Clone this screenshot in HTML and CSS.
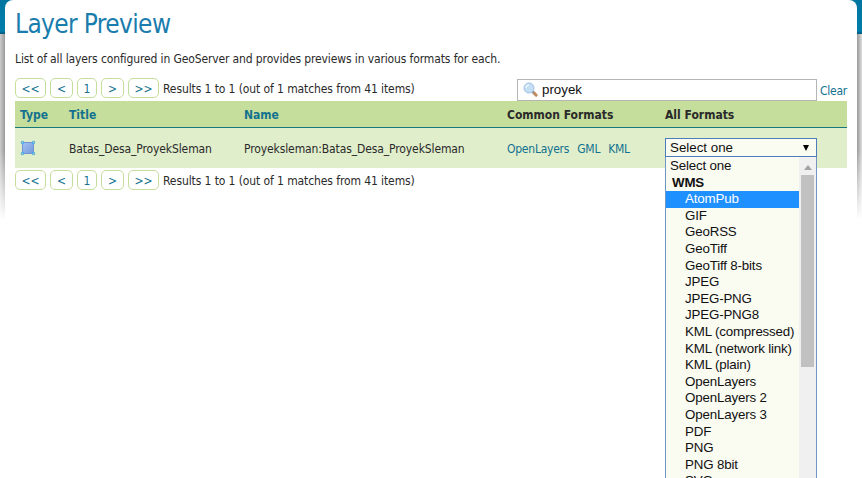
FILE: index.html
```html
<!DOCTYPE html>
<html lang="en">
<head>
<meta charset="utf-8">
<title>Layer Preview</title>
<link rel="stylesheet" href="styles.css">
</head>
<body>
<main class="page">
  <h1>Layer Preview</h1>
  <p class="intro">List of all layers configured in GeoServer and provides previews in various formats for each.</p>
  <div class="toolbar">
    <nav class="pager">
      <a class="wide">&lt;&lt;</a><a class="mid">&lt;</a><a class="num">1</a><a class="mid">&gt;</a><a class="wide">&gt;&gt;</a>
      <span class="results">Results 1 to 1 (out of 1 matches from 41 items)</span>
    </nav>
    <div class="search">
      <div class="field">
        <svg width="16" height="16" viewBox="0 0 16 16">
          <path d="M10.6 10.6l2.6 2.6" stroke="#c08a5c" stroke-width="3" stroke-linecap="round"/>
          <path d="M9.2 9.2l1.6 1.6" stroke="#8d96a3" stroke-width="2"/>
          <circle cx="6" cy="6" r="5" fill="#c4def4" stroke="#a3c0e2"/>
          <path d="M3 6a3 3 0 0 1 3-3" fill="none" stroke="#e9f5fd" stroke-width="1.5"/>
        </svg>
        <span>proyek</span>
      </div>
      <a class="clear">Clear</a>
    </div>
  </div>
  <div class="grid head">
    <a>Type</a><a>Title</a><a>Name</a><b>Common Formats</b><b>All Formats</b>
  </div>
  <div class="grid row">
    <div><svg class="type" width="16" height="16" viewBox="0 0 16 16">
      <defs><linearGradient id="g" x2="1" y2="1"><stop stop-color="#a5c2f0"/><stop offset="1" stop-color="#7398dc"/></linearGradient></defs>
      <rect x="2.5" y="2.5" width="11" height="11" fill="url(#g)" stroke="#7195d2"/>
      <g fill="#9bdcf5" stroke="#329ed3"><circle cx="2.5" cy="2.5" r="1.2"/><circle cx="13.5" cy="2.5" r="1.2"/><circle cx="2.5" cy="13.5" r="1.2"/><circle cx="13.5" cy="13.5" r="1.2"/></g>
    </svg></div>
    <div>Batas_Desa_ProyekSleman</div>
    <div>Proyeksleman:Batas_Desa_ProyekSleman</div>
    <div class="links"><a>OpenLayers</a><a>GML</a><a>KML</a></div>
    <div class="select">
      <div class="value"><span>Select one</span><svg width="6" height="6" viewBox="0 0 6 6"><path d="M0 0h6L3 6z"/></svg></div>
      <div class="menu">
        <ul>
          <li class="first">Select one</li>
          <li class="group">WMS</li>
          <li class="active">AtomPub</li>
          <li>GIF</li>
          <li>GeoRSS</li>
          <li>GeoTiff</li>
          <li>GeoTiff 8-bits</li>
          <li>JPEG</li>
          <li>JPEG-PNG</li>
          <li>JPEG-PNG8</li>
          <li>KML (compressed)</li>
          <li>KML (network link)</li>
          <li>KML (plain)</li>
          <li>OpenLayers</li>
          <li>OpenLayers 2</li>
          <li>OpenLayers 3</li>
          <li>PDF</li>
          <li>PNG</li>
          <li>PNG 8bit</li>
          <li>SVG</li>
        </ul>
        <div class="scroll"><svg width="8" height="5" viewBox="0 0 8 5"><path d="M0 5h8L4 0z" fill="#a3a3a3"/></svg><div class="thumb"></div></div>
      </div>
    </div>
  </div>
  <nav class="pager bottom">
    <a class="wide">&lt;&lt;</a><a class="mid">&lt;</a><a class="num">1</a><a class="mid">&gt;</a><a class="wide">&gt;&gt;</a>
    <span class="results">Results 1 to 1 (out of 1 matches from 41 items)</span>
  </nav>
</main>
</body>
</html>
```
FILE: styles.css
```css
* { box-sizing: border-box; }
html { height: 478px; overflow: hidden; }
body {
  margin: 0;
  height: 478px;
  padding: 0 5px;
  overflow: hidden;
  font: 12px/16px "DejaVu Sans Condensed", "DejaVu Sans", sans-serif;
  font-stretch: condensed;
  color: #2a2a2a;
  background:
    linear-gradient(#0076a1, #007dab 31px, #006186 33px, #006186 34px, transparent 34px),
    linear-gradient(transparent 34px, transparent 150px, #fff 220px),
    linear-gradient(90deg, #ccc, #999 5px, #999 857px, #ddd 862px);
}
.page {
  height: 478px;
  padding: 8px 10px 0;
  background: #fff;
  border-radius: 8px 8px 0 0;
}
a { color: #13728f; }
h1 {
  margin: 0;
  height: 32px;
  font: 26px/32px "DejaVu Sans Condensed", "DejaVu Sans", sans-serif;
  font-stretch: condensed;
  letter-spacing: -0.63px;
  color: #1a7dad;
}
.intro { margin: 11px 0 0; height: 27px; letter-spacing: -0.125px; white-space: nowrap; }
.toolbar { display: flex; justify-content: space-between; height: 23px; }
.pager { display: flex; gap: 4px; height: 20px; white-space: nowrap; }
.pager a {
  height: 20px;
  border: 1px solid #c5de9b;
  border-radius: 5px;
  line-height: 20px;
  text-align: center;
}
.wide { width: 31px; }
.mid { width: 23px; }
.num { width: 20px; }
.results { line-height: 22px; letter-spacing: -0.1px; }
.bottom { margin-top: 2px; }
.search { display: flex; margin-top: 1px; }
.field {
  display: flex;
  align-items: center;
  gap: 3px;
  width: 300px;
  height: 22px;
  padding-left: 5px;
  border: 1px solid #b5b5b5;
  font: 13.33px/20px "Liberation Sans", sans-serif;
  color: #111;
}
.clear { width: 30px; padding-left: 3px; line-height: 24px; letter-spacing: -0.25px; }
.grid {
  display: grid;
  grid-template-columns: 49px 175px 263px 158px 1fr;
  padding-left: 5px;
  white-space: nowrap;
}
.head {
  height: 27px;
  border-bottom: 1px solid #16777e;
  background: #c5de9b;
  font-weight: bold;
  line-height: 28px;
}
.row { height: 40px; background: #e0eecc; line-height: 42px; letter-spacing: -0.11px; }
.type { display: block; margin-top: 12px; }
.links { display: flex; gap: 8px; letter-spacing: -0.24px; }
.select {
  position: relative;
  width: 152px;
  margin-top: 10px;
  font: 13.33px/17px "Liberation Sans", sans-serif;
  letter-spacing: 0;
  color: #111;
}
.value {
  display: flex;
  align-items: center;
  justify-content: space-between;
  width: 152px;
  height: 19px;
  padding: 0 7px 0 4px;
  border: 1px solid #4d7cbd;
  background: #fafbf1;
}
.menu {
  position: absolute;
  top: 19px;
  left: 0;
  display: flex;
  width: 152px;
  height: 330px;
  border: 1px solid #7294c1;
  border-top: 0;
  overflow: hidden;
  background: #fafbf1;
  letter-spacing: -0.17px;
}
.menu ul { width: 133px; margin: 0; padding: 1px 0 0; list-style: none; }
.menu li { height: 16.6px; padding-left: 19px; line-height: 16.6px; }
.menu .first { padding-left: 4px; }
.menu .group { padding-left: 6px; font-weight: bold; }
.menu .active { background: #1e90ff; color: #fff; }
.scroll { width: 17px; padding: 8px 2px 0; background: #f0f0f0; }
.scroll svg { display: block; margin: 0 auto 5px; }
.thumb { height: 192px; width: 13px; background: #c1c1c1; }
```
